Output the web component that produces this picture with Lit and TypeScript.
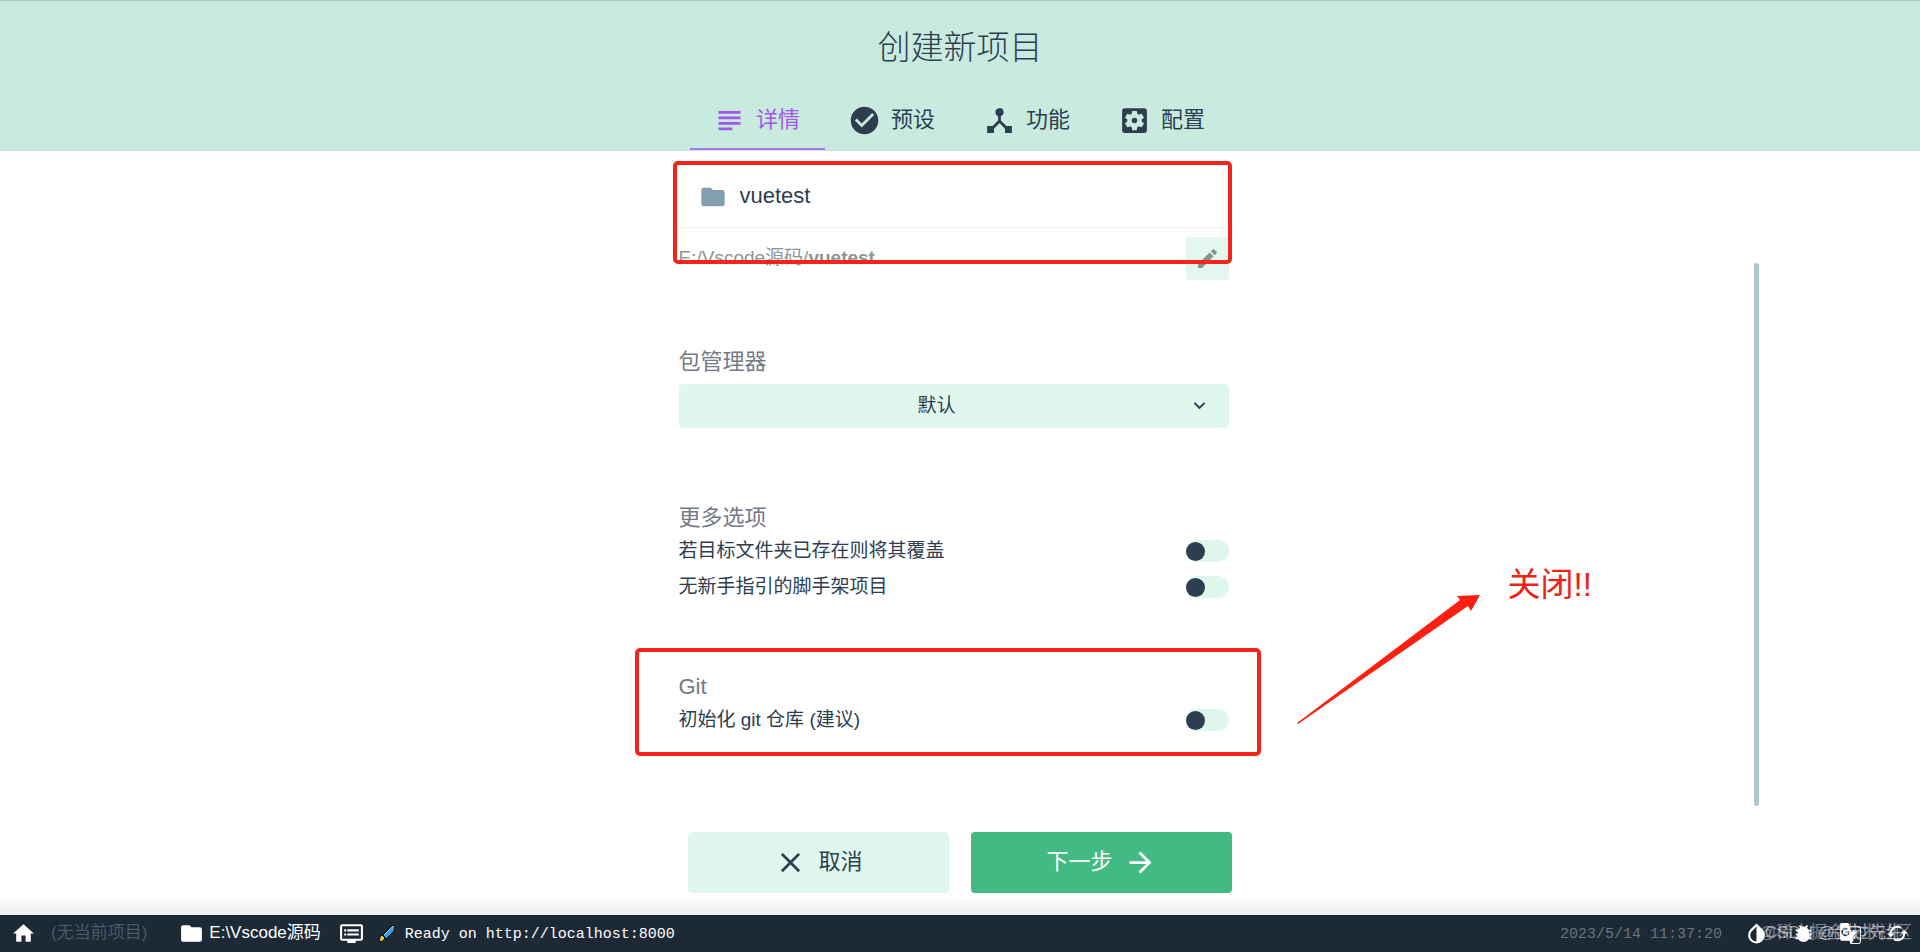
import { LitElement, html, css, svg } from "lit";
import { customElement, state } from "lit/decorators.js";

const icon = (d: string, size = "") =>
  html`<svg class="icon ${size}" viewBox="0 0 24 24" aria-hidden="true">${svg`<path d=${d}></path>`}</svg>`;

const I = {
  subject: "M4 5h16v2H4zM4 9h16v2H4zM4 13h16v2H4zM4 17h10v2H4z",
  check: "M12 2a10 10 0 1 0 0 20 10 10 0 0 0 0-20zm-2 15-5-5 1.4-1.4 3.6 3.6 7.6-7.6L19 8z",
  hub: "M17 16l-4-4V8.82A3 3 0 1 0 9 6a3 3 0 0 0 2 2.82V12l-4 4H3v5h5v-3.05l4-4.2 4 4.2V21h5v-5z",
  settings:
    "M12 10a2 2 0 1 0 0 4 2 2 0 0 0 0-4zm7-7H5a2 2 0 0 0-2 2v14a2 2 0 0 0 2 2h14a2 2 0 0 0 2-2V5a2 2 0 0 0-2-2zm-1.75 9c0 .23-.02.46-.05.68l1.48 1.16c.13.11.17.3.08.45l-1.4 2.42c-.09.15-.27.21-.43.15l-1.74-.7c-.36.28-.76.51-1.18.69l-.26 1.85c-.03.17-.18.3-.35.3h-2.8c-.17 0-.32-.13-.35-.29l-.26-1.85c-.43-.18-.82-.41-1.18-.69l-1.74.7c-.16.06-.34 0-.43-.15l-1.4-2.42a.35.35 0 0 1 .08-.45l1.48-1.16A6.3 6.3 0 0 1 6.75 12c0-.23.02-.46.05-.68l-1.48-1.16a.35.35 0 0 1-.08-.45l1.4-2.42c.09-.15.27-.21.43-.15l1.74.7c.36-.28.76-.51 1.18-.69l.26-1.85c.03-.17.18-.3.35-.3h2.8c.17 0 .32.13.35.29l.26 1.85c.43.18.82.41 1.18.69l1.74-.7c.16-.06.34 0 .43.15l1.4 2.42c.09.15.05.34-.08.45l-1.48 1.16c.03.23.05.46.05.69z",
  folder: "M10 4H4a2 2 0 0 0-2 2v12c0 1.100.9 2 2 2h16a2 2 0 0 0 2-2V8a2 2 0 0 0-2-2h-8z",
  edit: "M3 17.250V21h3.750L17.810 9.940l-3.750-3.750zM20.710 7.040a1 1 0 0 0 0-1.410l-2.340-2.340a1 1 0 0 0-1.410 0l-1.830 1.830 3.750 3.750z",
  chevron: "M7.410 8.590 12 13.170l4.590-4.580L18 10l-6 6-6-6z",
  close: "M19 6.410 17.590 5 12 10.590 6.410 5 5 6.410 10.590 12 5 17.590 6.410 19 12 13.410 17.590 19 19 17.590 13.410 12z",
  next: "M12 4l-1.410 1.410L16.170 11H4v2h12.170l-5.580 5.590L12 20l8-8z",
  home: "M10 20v-6h4v6h5v-8h3L12 3 2 12h3v8z",
  monitor:
    "M21 3H3a2 2 0 0 0-2 2v12a2 2 0 0 0 2 2h5v2h8v-2h5a2 2 0 0 0 2-2V5a2 2 0 0 0-2-2zm0 14H3V5h18zM19 8H8v2h11zM19 12H8v2h11zM7 8H5v2h2zM7 12H5v2h2z",
  drop: "M17.660 8 12 2.350 6.340 8A8 8 0 0 0 4 13.640c0 2 .78 4.110 2.340 5.670a8 8 0 0 0 11.320 0A8 8 0 0 0 20 13.640 8 8 0 0 0 17.660 8zM6 14c.01-2 .62-3.270 1.760-4.400L12 5.270V19.670A5.800 5.800 0 0 1 6 14z",
  bug: "M20 8h-2.810a6 6 0 0 0-1.820-1.960L17 4.410 15.590 3l-2.170 2.170a6 6 0 0 0-2.830 0L8.410 3 7 4.410l1.620 1.630A6 6 0 0 0 6.810 8H4v2h2.090A6 6 0 0 0 6 11v1H4v2h2v1l.09 1H4v2h2.810a6 6 0 0 0 10.380 0H20v-2h-2.090l.09-1v-1h2v-2h-2v-1l-.09-1H20z",
  translate:
    "M20 5h-9.120L10 2H4a2 2 0 0 0-2 2v13c0 1.100.9 2 2 2h7l1 3h8a2 2 0 0 0 2-2V7a2 2 0 0 0-2-2zM7.170 14.590a4.090 4.090 0 1 1 2.760-7.100l-1.200 1.150a2.500 2.500 0 1 0-1.560 4.420c1.550 0 2.130-1.050 2.250-1.750H7.170V9.760h3.950c.04.210.06.420.06.650 0 2.440-1.630 4.180-4.010 4.180zM21 20c0 .550-.450 1-1 1h-7l2-2-1.190-3.950 2.370 2.450.7-.7-2.400-2.300A9 9 0 0 0 17.500 11H19v-1h-3.500V9h-1v1h-2L11.180 6H20c.550 0 1 .450 1 1z",
  refresh:
    "M19 8l-4 4h3a6 6 0 0 1-8.800 5.300l-1.460 1.460A8 8 0 0 0 20 12h3zM6 12a6 6 0 0 1 8.800-5.300l1.460-1.460A8 8 0 0 0 4 12H1l4 4 4-4z",
};

@customElement("app-root")
export class AppRoot extends LitElement {
  @state() private tab = 0;

  private tabs = [
    { label: "详情", d: I.subject },
    { label: "预设", d: I.check },
    { label: "功能", d: I.hub },
    { label: "配置", d: I.settings },
  ];

  static styles = css`
    :host {
      display: flex;
      flex-direction: column;
      min-height: 100vh;
      background: #fff;
      color: #2c3e50;
      font: 19px/1.2 "Liberation Sans", "Noto Sans CJK SC", sans-serif;
    }
    * { box-sizing: border-box; }
    button, input, select { font: inherit; color: inherit; margin: 0; border: 0; }
    button { cursor: pointer; padding: 0; }
    .icon { width: 28px; height: 28px; fill: currentColor; flex: none; display: block; }
    .icon.lg { width: 33px; height: 33px; }
    .icon.md { width: 25px; height: 25px; }
    .icon.sm { width: 23px; height: 23px; }

    header {
      background: #c9ebdf;
      border-top: 1px solid #b0c9c0;
      border-bottom: 1px solid #cfe0da;
    }
    h1 { margin: 0; padding-top: 5px; font-size: 33px; font-weight: 300; line-height: 84px; text-align: center; }
    .tabs { display: flex; justify-content: center; }
    .tab {
      width: 135px; height: 60px; background: none; font-size: 22px;
      display: flex; align-items: center; justify-content: center; gap: 10px; padding-right: 2px;
      border-top: 2px solid transparent; border-bottom: 2px solid transparent;
    }
    .tab.active { color: #a257e8; border-bottom-color: #a57be6; }

    .scroller { flex: 1; display: flex; width: 100%; max-width: 1600px; margin: 0 auto; }
    .scroll-body { flex: 1; padding-top: 15px; }
    .track { width: 13px; padding: 112px 1px 8px 0; display: flex; justify-content: flex-end; }
    .thumb { width: 5px; border-radius: 3px; background: #b0c6d0; }
    form { width: 550px; max-width: 100%; margin: 0 auto; display: grid; gap: 67px; }
    section { position: relative; }
    .name {
      display: flex; align-items: center; gap: 13px; height: 62px; padding: 0 19px;
      border-bottom: 1px solid #eef5f4; border-left: 1px solid #f6faf9;
    }
    .name .icon { color: #839fae; }
    .name input { flex: 1; min-width: 0; padding: 0; background: none; font-size: 22px; outline: none; }
    .path { display: flex; align-items: center; justify-content: space-between; margin-top: 9px; color: #8b9696; }
    .path b { font-weight: 700; }
    .edit {
      width: 43px; height: 43px; display: grid; place-items: center;
      background: #e4f7ef; color: #84928f; border-radius: 3px;
    }
    h2 { margin: 0; font-size: 22px; line-height: 30px; font-weight: 400; color: #737a85; }
    .select { position: relative; margin: 7px 0 8px; color: #2c3e50; }
    .select select {
      appearance: none; display: block; width: 100%; height: 44px; padding: 0 34px 0 0;
      background: #e0f7ed; border-radius: 4px; text-align-last: center;
    }
    .select .icon { position: absolute; right: 18px; top: 10px; pointer-events: none; }
    .row { display: flex; align-items: center; justify-content: space-between; height: 36px; }
    .toggle { appearance: none; width: 43px; height: 22px; border-radius: 11px; background: #e0f7ed; display: flex; align-items: center; }
    .toggle::before { content: ""; width: 19px; height: 19px; border-radius: 50%; background: #2c3e50; }
    .toggle:checked { justify-content: flex-end; }

    .mark { position: absolute; border: 4px solid #f5241b; border-radius: 5px; pointer-events: none; }
    .mark-folder { inset: -5px -3px 16px -6px; }
    .mark-git { inset: -24px -32px -18px -44px; }
    .arrow { position: absolute; left: 617px; top: -78px; width: 186px; height: 132px; fill: #fd2012; pointer-events: none; }
    .note { position: absolute; left: 829px; top: -109px; font-size: 33px; line-height: 44px; color: #ee2218; white-space: nowrap; }

    .actions {
      display: flex; justify-content: center; gap: 22px; padding: 18px 0 22px;
      background: linear-gradient(#fff 78%, #efefef);
    }
    .action {
      width: 261px; height: 61px; border-radius: 4px; font-size: 22px;
      display: flex; align-items: center; justify-content: center; gap: 11px;
    }
    .cancel { background: #e0f7ed; }
    .next { background: #43b984; color: #fff; }

    footer {
      position: relative; display: flex; align-items: center; height: 37px; padding: 0 11px;
      background: #1d2935; color: #fff; font-size: 17px; white-space: nowrap;
    }
    .item { display: flex; align-items: center; gap: 5px; color: inherit; text-decoration: none; background: none; }
    .none { margin: 0 32px 0 15px; color: #47596c; }
    .cwd { margin-right: 18px; }
    .brush { width: 18px; height: 19px; margin: 0 9px 0 14px; }
    .mono { padding-top: 3px; font-family: "Liberation Mono", monospace; font-size: 15px; }
    .date { margin-left: auto; color: #6a747d; }
    .tools { display: flex; align-items: center; gap: 23px; margin: 0 0 0 22px; }
    .water { position: absolute; right: 8px; color: #fff; opacity: .4; pointer-events: none; }
    .water.author { right: 17px; opacity: .55; }
  `;

  render() {
    return html`
      <header>
        <h1>创建新项目</h1>
        <nav class="tabs" role="tablist">
          ${this.tabs.map(
            (t, i) => html`<button role="tab" class="tab ${i === this.tab ? "active" : ""}"
              aria-selected=${i === this.tab ? "true" : "false"} @click=${() => (this.tab = i)}>
              ${icon(t.d, "lg")}<span>${t.label}</span></button>`
          )}
        </nav>
      </header>
      <main class="scroller">
        <div class="scroll-body">
          <form @submit=${(e: Event) => e.preventDefault()}>
            <section>
              <label class="name">${icon(I.folder)}<input type="text" aria-label="项目文件夹" value="vuetest" /></label>
              <div class="path">
                <span>E:/Vscode源码/<b>vuetest</b></span>
                <button type="button" class="edit" aria-label="编辑">${icon(I.edit, "md")}</button>
              </div>
              <div class="mark mark-folder"></div>
            </section>
            <section>
              <h2><label for="pm">包管理器</label></h2>
              <div class="select">
                <select id="pm"><option>默认</option></select>
                ${icon(I.chevron, "sm")}
              </div>
            </section>
            <section>
              <h2>更多选项</h2>
              <label class="row">若目标文件夹已存在则将其覆盖<input type="checkbox" class="toggle" /></label>
              <label class="row">无新手指引的脚手架项目<input type="checkbox" class="toggle" /></label>
            </section>
            <section>
              <h2>Git</h2>
              <label class="row">初始化 git 仓库 (建议)<input type="checkbox" class="toggle" /></label>
              <div class="mark mark-git"></div>
              <svg class="arrow" viewBox="0 0 186 132" aria-hidden="true">
                <path d="M1 129 164 6 161 2 184 1 175 17 172 12 2 130z"></path>
              </svg>
              <span class="note">关闭!!</span>
            </section>
          </form>
        </div>
        <div class="track"><div class="thumb"></div></div>
      </main>
      <div class="actions">
        <button class="action cancel">${icon(I.close, "lg")}<span>取消</span></button>
        <button class="action next"><span>下一步</span>${icon(I.next, "lg")}</button>
      </div>
      <footer>
        <a class="item" href="#" aria-label="首页">${icon(I.home, "md")}</a>
        <span class="none">(无当前项目)</span>
        <a class="item cwd" href="#">${icon(I.folder, "md")}<span>E:\\Vscode源码</span></a>
        <button class="item" aria-label="日志">${icon(I.monitor, "md")}</button>
        <svg class="brush" viewBox="0 0 18 19" aria-hidden="true">
          <path d="M5 11 15 1l2 1-1 5-8 8z" fill="#3d9be8" stroke="#0b1016"></path>
          <path d="M6 11 15 2" stroke="#9fd4f7" fill="none"></path>
          <path d="M1 18l1-5 2-2 3 3-2 3z" fill="#e9c93a" stroke="#0b1016"></path>
        </svg>
        <span class="mono">Ready on http://localhost:8000</span>
        <span class="mono date">2023/5/14 11:37:20</span>
        <div class="tools">
          <button class="item" aria-label="主题">${icon(I.drop, "md")}</button>
          <button class="item" aria-label="报告问题">${icon(I.bug, "sm")}</button>
          <button class="item" aria-label="翻译">${icon(I.translate, "md")}</button>
          <button class="item" aria-label="刷新">${icon(I.refresh, "sm")}</button>
        </div>
        <span class="water">@稀土掘金技术社区</span>
        <span class="water author">CSDN @剑过先生</span>
      </footer>
    `;
  }
}
